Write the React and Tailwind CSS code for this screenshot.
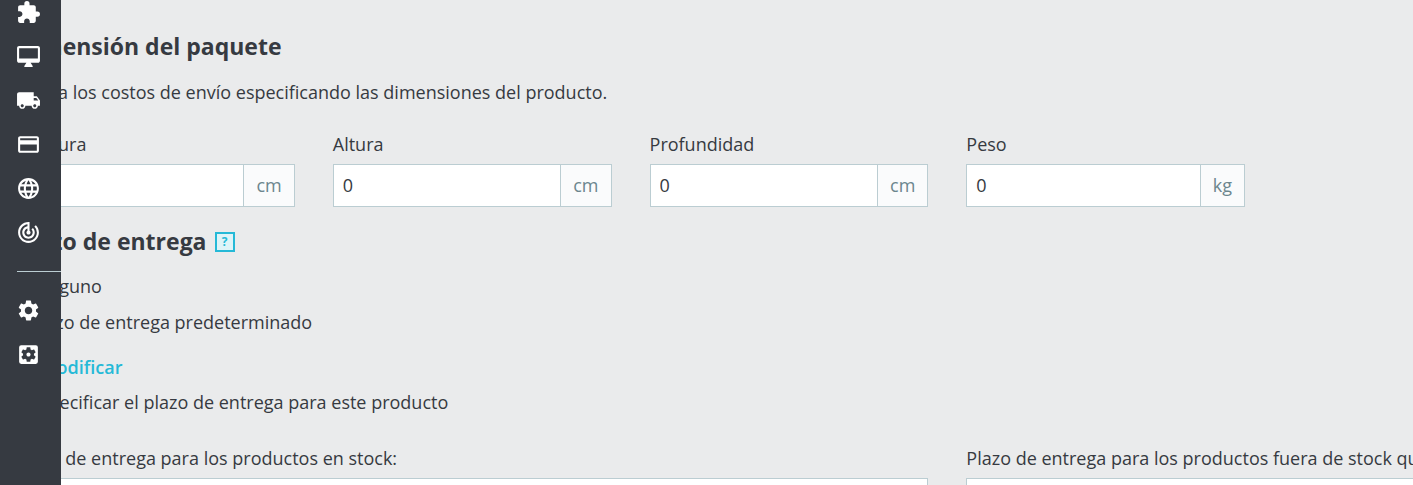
import { useState } from "react";
import {
  MdCreate,
  MdExtension,
  MdLanguage,
  MdLocalShipping,
  MdOutlineDesktopMac,
  MdPayment,
  MdSettings,
  MdSettingsApplications,
  MdTrackChanges,
} from "react-icons/md";

const mainLinks = [
  { label: "Módulos", icon: MdExtension },
  { label: "Diseño", icon: MdOutlineDesktopMac },
  { label: "Transporte", icon: MdLocalShipping },
  { label: "Pago", icon: MdPayment },
  { label: "Internacional", icon: MdLanguage },
  { label: "Marketing", icon: MdTrackChanges },
];

const configLinks = [
  { label: "Parámetros de la tienda", icon: MdSettings },
  { label: "Parámetros avanzados", icon: MdSettingsApplications },
];

const dimensions = [
  { id: "width", label: "Anchura", unit: "cm" },
  { id: "height", label: "Altura", unit: "cm" },
  { id: "depth", label: "Profundidad", unit: "cm" },
  { id: "weight", label: "Peso", unit: "kg" },
];

function NavLinks({ links }) {
  return links.map(({ label, icon: Icon }) => (
    <a key={label} href="#" aria-label={label} className="flex h-11 items-center">
      <Icon className="size-[25px]" />
    </a>
  ));
}

function Sidebar() {
  return (
    <nav className="fixed inset-y-0 left-0 z-10 w-[61px] overflow-hidden bg-[#363a41] pl-4 text-white">
      <div className="-mt-[10px]">
        <NavLinks links={mainLinks} />
      </div>
      <hr className="mt-[17px] mb-4 ml-px border-[#bbcdd2]" />
      <NavLinks links={configLinks} />
    </nav>
  );
}

function UnitField({ id, label, unit }) {
  const [value, setValue] = useState("0");

  return (
    <div>
      <label htmlFor={id} className="mb-2 block">
        {label}
      </label>
      <div className="flex h-[43px] border border-[#bbcdd2] bg-white">
        <input
          id={id}
          type="text"
          value={value}
          onChange={(e) => setValue(e.target.value)}
          className="min-w-0 flex-1 px-[9px] pb-px outline-none"
        />
        <span className="flex items-center border-l border-[#bbcdd2] bg-[#fafbfc] px-3 pb-px text-[#6c868e]">
          {unit}
        </span>
      </div>
    </div>
  );
}

function DeliveryOption({ value, selected, onSelect, children }) {
  return (
    <label className="flex items-center gap-0.5">
      <input
        type="radio"
        name="delivery"
        checked={selected === value}
        onChange={() => onSelect(value)}
        className="size-3"
      />
      {children}
    </label>
  );
}

function NoteField({ id, label }) {
  return (
    <div className="col-span-3">
      <label htmlFor={id} className="mb-2 block whitespace-nowrap">
        {label}
      </label>
      <input id={id} type="text" className="h-[43px] w-full border border-[#bbcdd2] bg-white px-[9px]" />
    </div>
  );
}

export default function App() {
  const [delivery, setDelivery] = useState("default");

  return (
    <div className="h-screen overflow-hidden bg-[#eaebec] font-['Open_Sans',sans-serif] text-[18px] leading-6 text-[#363a41]">
      <Sidebar />
      <main className="pt-[31px] pl-4">
        {/* The form is wider than the window and runs off the right edge */}
        <div className="w-4/3">
          <h2 className="text-[23px] leading-[30px] font-bold">Dimensión del paquete</h2>
          <p className="mt-[19px]">
            Ajusta los costos de envío especificando las dimensiones del producto.
          </p>
          <div className="mt-7 grid grid-cols-6 gap-[38px]">
            {dimensions.map((field) => (
              <UnitField key={field.id} {...field} />
            ))}
          </div>

          <h2 className="mt-[19px] flex items-center gap-2 text-[23px] leading-[30px] font-bold">
            Plazo de entrega
            <button
              type="button"
              aria-label="Ayuda"
              className="mt-0.5 flex size-5 items-center justify-center border-2 border-[#25b9d7] bg-[#def4f8] text-[12px] leading-none text-[#25b9d7]"
            >
              ?
            </button>
          </h2>
          <div className="mt-[18px]">
            <DeliveryOption value="none" selected={delivery} onSelect={setDelivery}>
              Ninguno
            </DeliveryOption>
            <div className="mt-3">
              <DeliveryOption value="default" selected={delivery} onSelect={setDelivery}>
                Plazo de entrega predeterminado
              </DeliveryOption>
            </div>
            <a href="#" className="mt-[21px] flex w-fit items-center gap-1 font-semibold text-[#25b9d7]">
              <MdCreate className="size-5" />
              Modificar
            </a>
            <div className="mt-[11px]">
              <DeliveryOption value="specific" selected={delivery} onSelect={setDelivery}>
                Especificar el plazo de entrega para este producto
              </DeliveryOption>
            </div>
          </div>

          <div className="mt-8 grid grid-cols-6 gap-[38px]">
            <NoteField id="in-stock" label="Plazo de entrega para los productos en stock:" />
            <NoteField
              id="out-of-stock"
              label="Plazo de entrega para los productos fuera de stock que permiten pedidos:"
            />
          </div>
        </div>
      </main>
    </div>
  );
}
